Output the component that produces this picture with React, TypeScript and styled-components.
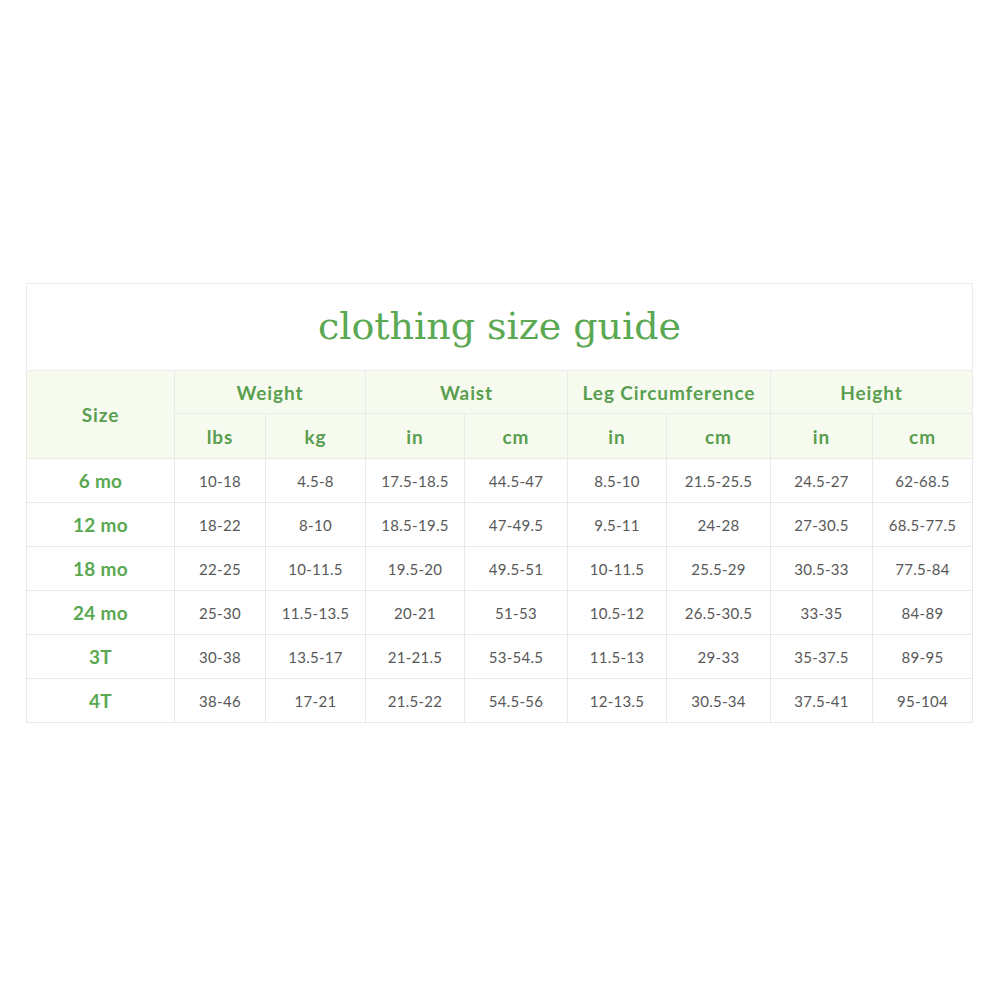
import React from "react";
import styled, { createGlobalStyle } from "styled-components";

const Global = createGlobalStyle`
  html, body { margin: 0; padding: 0; background: #ffffff; }
`;

const Page = styled.div`
  width: 1000px;
  height: 1000px;
  box-sizing: border-box;
  padding: 283px 28px 0 26px;
`;

const Table = styled.table`
  width: 946px;
  border-collapse: collapse;
  table-layout: fixed;
  border: 1px solid #ececec;
`;

const TitleCell = styled.th`
  height: 84px;
  padding: 0 0 2px 0;
  font-family: "DejaVu Serif", "Liberation Serif", serif;
  font-weight: 400;
  font-size: 38px;
  color: #5aa852;
  text-align: center;
  vertical-align: middle;
  border-bottom: 1px solid #ececec;
  background: #ffffff;
`;

const HeadCell = styled.th<{ $h: number }>`
  height: ${(p) => p.$h}px;
  padding: 0;
  background: #f7fbef;
  border: 1px solid #e9ece4;
  font-family: "Lato", "Noto Sans", sans-serif;
  font-weight: 700;
  font-size: 19px;
  letter-spacing: 0.9px;
  color: #5a9e50;
  text-align: center;
  vertical-align: middle;
`;

const SizeCell = styled.td`
  height: 43px;
  padding: 0;
  border: 1px solid #e8e8e8;
  font-family: "Lato", "Noto Sans", sans-serif;
  font-weight: 700;
  font-size: 19px;
  letter-spacing: 0.3px;
  color: #5aa852;
  text-align: center;
  vertical-align: middle;
`;

const DataCell = styled.td`
  height: 43px;
  padding: 0;
  border: 1px solid #e8e8e8;
  font-family: "Lato", "Noto Sans", sans-serif;
  font-weight: 400;
  font-size: 15px;
  letter-spacing: 0.3px;
  color: #585858;
  text-align: center;
  vertical-align: middle;
`;

const widths = [148, 91, 100, 99, 103, 99, 104, 102, 100];

const rows: [string, string[]][] = [
  ["6 mo", ["10-18", "4.5-8", "17.5-18.5", "44.5-47", "8.5-10", "21.5-25.5", "24.5-27", "62-68.5"]],
  ["12 mo", ["18-22", "8-10", "18.5-19.5", "47-49.5", "9.5-11", "24-28", "27-30.5", "68.5-77.5"]],
  ["18 mo", ["22-25", "10-11.5", "19.5-20", "49.5-51", "10-11.5", "25.5-29", "30.5-33", "77.5-84"]],
  ["24 mo", ["25-30", "11.5-13.5", "20-21", "51-53", "10.5-12", "26.5-30.5", "33-35", "84-89"]],
  ["3T", ["30-38", "13.5-17", "21-21.5", "53-54.5", "11.5-13", "29-33", "35-37.5", "89-95"]],
  ["4T", ["38-46", "17-21", "21.5-22", "54.5-56", "12-13.5", "30.5-34", "37.5-41", "95-104"]],
];

const groups = ["Weight", "Waist", "Leg Circumference", "Height"];
const units = ["lbs", "kg", "in", "cm", "in", "cm", "in", "cm"];

export default function App() {
  return (
    <>
      <Global />
      <Page>
        <Table>
          <colgroup>
            {widths.map((w, i) => (
              <col key={i} style={{ width: w }} />
            ))}
          </colgroup>
          <thead>
            <tr>
              <TitleCell colSpan={9}>clothing size guide</TitleCell>
            </tr>
            <tr>
              <HeadCell $h={42} rowSpan={2}>
                Size
              </HeadCell>
              {groups.map((g) => (
                <HeadCell $h={42} key={g} colSpan={2}>
                  {g}
                </HeadCell>
              ))}
            </tr>
            <tr>
              {units.map((u, i) => (
                <HeadCell $h={44} key={i}>
                  {u}
                </HeadCell>
              ))}
            </tr>
          </thead>
          <tbody>
            {rows.map(([size, vals]) => (
              <tr key={size}>
                <SizeCell>{size}</SizeCell>
                {vals.map((v, i) => (
                  <DataCell key={i}>{v}</DataCell>
                ))}
              </tr>
            ))}
          </tbody>
        </Table>
      </Page>
    </>
  );
}
